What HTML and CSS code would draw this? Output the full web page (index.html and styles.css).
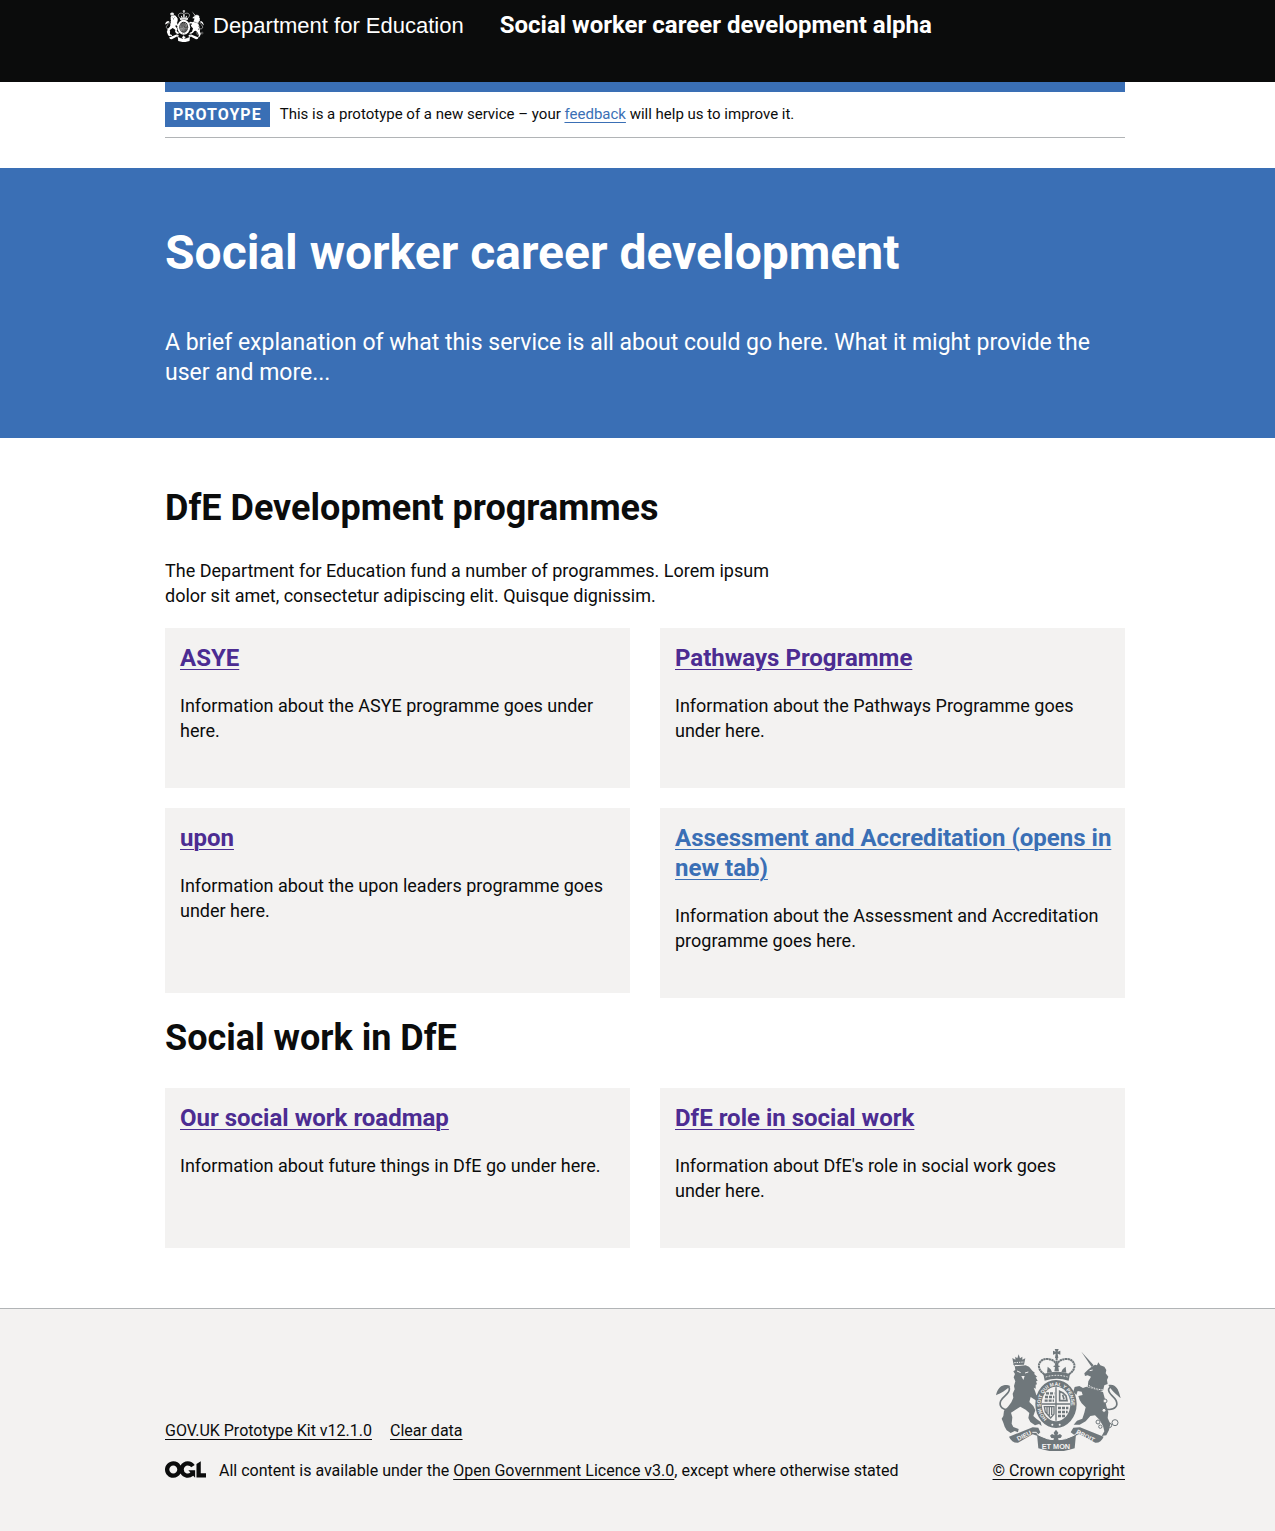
FILE: index.html
```html
<!DOCTYPE html>
<html lang="en">
<head>
<meta charset="utf-8">
<meta name="viewport" content="width=device-width, initial-scale=1">
<title>Social worker career development</title>
<link rel="stylesheet" href="styles.css">
</head>
<body>
<svg class="sprite" aria-hidden="true">
  <defs>
    <symbol id="crest" viewBox="37 25 375 306">
      <g fill="currentColor">
        <!-- lion -->
        <path d="M86 52l9 5 0-9 6 5 4-12 4 12 7-5 0 9 9-4-4 19-31 1z"/>
        <path d="M92 77l34-3 10 4 10 12 8 7-3 2 10 10-5 1 6 11-5 1 3 9-4 1v12l-6-3 4 10 4 12 13 8 6 8-4 9-10-2-8-8-14-9-4 15 12 12 6 13-6 17 9 8 13 10 3 12-8-6-12 4-14-10-6-12 3-15-11-10-16-9-12 8-16 10 4 14-2 19 5 10 16 6-2 10-10-4-12 6-12-8-6-11-4-12-5-12 5-8 2-16 12-12 10-13 6-14-2-12 6-13-2-10 4-14-5-12 4-10-5-8 6-4-2-14-4-5z"/>
        <!-- unicorn -->
        <path d="M293 33l37 41-6 5z"/>
        <path d="M322 80l12-8 6 2 4-9 6 9 12 4 6 10-2 10 8 10-4 10 2 12-10 4-4 16-10 2-36-14 2-16 8-14-10-4-8 2-2-8 10-10z"/>
        <path d="M308 138l50 16 6 22 4 20 6 18-2 18 8 18-4 18-8 16-14 2 8-14-4-16-10-18-14-14-14 2-14 16-18 10-18 0 10-12 16-6 6-18 4-16-12-12-6-10-4-12 13-3-3-10-12-2-4 12-9-10 4-14 14-3 11 6z"/>
      </g>
      <g fill="none" stroke="currentColor" stroke-width="5">
        <path d="M83 206c-26 5-38-9-32-25 7-16 29-22 26-38-3-11-20-8-28 3"/>
        <path d="M370 206c26 3 34-12 27-27-8-15-25-20-22-34 4-10 18-7 25 3"/>
        <g stroke-width="3">
          <circle cx="364" cy="181" r="6" fill="var(--crest-ground)"/>
          <circle cx="361" cy="209" r="6" fill="var(--crest-ground)"/>
          <circle cx="343" cy="244" r="6" fill="var(--crest-ground)"/>
          <circle cx="350" cy="258" r="5" fill="var(--crest-ground)"/>
          <circle cx="377" cy="254" r="7"/>
          <circle cx="394" cy="246" r="9"/>
        </g>
      </g>
      <path fill="currentColor" d="M80 136c-22-9-38 4-43 28 17-8 28-14 43-28zM374 133c22-5 31 12 37 40-14-13-25-20-37-40z"/>
      <g fill="none" stroke="var(--crest-ground)" stroke-width="3">
        <path d="M100 91l11 5M124 97l10-3"/>
        <path d="M92 66l29-2" stroke-dasharray="4 3"/>
        <path d="M309 130l14 9 16 6 19 3" stroke-dasharray="5 3"/>
        <path d="M318 90l9-2"/>
      </g>
      <path fill="var(--crest-ground)" d="M113 106h10l-4 12z"/>
      <!-- crown -->
      <g fill="currentColor">
        <path d="M213 25h12l-3 8 8-3v12l-8-3 2 13h-10l2-13-8 3v-12l8 3z"/>
        <path d="M179 100q40-13 80 0l-4 20q-36-11-72 0z"/>
        <path d="M190 96l2-18 9 8 4 8zM248 96l-2-18-9 8-4 8zM212 92l2-12-6-3 7-3 4-8 4 8 7 3-6 3 2 12z"/>
      </g>
      <g fill="none" stroke="currentColor" stroke-width="6" stroke-dasharray="7 1">
        <path d="M182 101c-26-18-19-45 7-46 20 0 29 10 29 22"/>
        <path d="M256 101c26-18 19-45-7-46-20 0-29 10-29 22"/>
        <path d="M219 52v16"/>
      </g>
      <path fill="none" stroke="var(--crest-ground)" stroke-width="3" stroke-dasharray="5 4" d="M186 109q33-10 66 0"/>
      <!-- garter and shield -->
      <ellipse cx="217" cy="190" rx="62" ry="72" fill="currentColor"/>
      <ellipse cx="217" cy="190" rx="43" ry="52" fill="var(--crest-ground)"/>
      <g fill="var(--crest-ground)"><circle cx="206" cy="252" r="3"/><circle cx="228" cy="252" r="3"/></g>
      <g fill="none" stroke="currentColor" stroke-width="4">
        <path d="M217 140v100M175 190h84"/>
        <path stroke-width="7" stroke-dasharray="9 3" d="M187 158h25M184 169h28M183 180h28M223 202h31M223 214h29M223 226h22"/>
        <path stroke-width="5" d="M228 152v28h22l-3-14-9-9zM237 162l4 14"/>
        <path d="M182 198h29v22l-10 12-16-18zM190 199v20M197 199v26M204 199v24"/>
      </g>
      <!-- ribbon -->
      <g fill="currentColor">
        <path d="M76 288l71-28 17 1 6 14-10 10-13-4-44 25q-19 1-27-18z"/>
        <path d="M360 288l-71-28-20 1-8 14 14 10 13-4 47 25q17 1 25-18z"/>
        <path d="M160 281q58 34 117 0l-4 42q-54 19-109 0z"/>
      </g>
      <path fill="none" stroke="var(--crest-ground)" stroke-width="3" d="M146 275l12 0 6 8q54 30 109 0l8-8 10 0"/>
      <path fill="var(--crest-ground)" d="M193 262q24 7 48 0l2 32q-26 8-52 0z"/>
      <path fill="currentColor" d="M217 267l7 9-3 8 8-4 6 5-4 7-8 1 3 9h-18l3-9-8-1-4-7 6-5 8 4-3-8z"/>
    </symbol>
    <path id="garter-line" d="M190 235A46 55 0 1 1 244 235"/>
  </defs>
</svg>

<header class="header">
  <div class="container header__inner">
    <a class="header__logo" href="#">
      <svg class="header__crest" aria-hidden="true"><use href="#crest"/></svg>
      <span>Department for Education</span>
    </a>
    <a class="header__service" href="#">Social worker career development alpha</a>
  </div>
</header>

<div class="page-row">
  <div class="container phase">
    <strong class="phase__tag">PROTOYPE</strong>
    <span class="phase__text">This is a prototype of a new service – your <a class="link" href="#">feedback</a> will help us to improve it.</span>
  </div>
</div>

<section class="hero">
  <div class="container">
    <h1 class="hero__title">Social worker career development</h1>
    <p class="hero__text">A brief explanation of what this service is all about could go here. What it might provide the user and more...</p>
  </div>
</section>

<main class="page-row main">
  <div class="container">
    <h2 class="heading">DfE Development programmes</h2>
    <p class="intro">The Department for Education fund a number of programmes. Lorem ipsum dolor sit amet, consectetur adipiscing elit. Quisque dignissim.</p>
    <div class="cards">
      <article class="card">
        <h3 class="card__title"><a class="link link--visited" href="#">ASYE</a></h3>
        <p class="card__text">Information about the ASYE programme goes under here.</p>
      </article>
      <article class="card">
        <h3 class="card__title"><a class="link link--visited" href="#">Pathways Programme</a></h3>
        <p class="card__text">Information about the Pathways Programme goes under here.</p>
      </article>
      <article class="card card--tall">
        <h3 class="card__title"><a class="link link--visited" href="#">upon</a></h3>
        <p class="card__text">Information about the upon leaders programme goes under here.</p>
      </article>
      <article class="card card--tall">
        <h3 class="card__title"><a class="link" href="#">Assessment and Accreditation (opens in new tab)</a></h3>
        <p class="card__text">Information about the Assessment and Accreditation programme goes here.</p>
      </article>
    </div>
    <h2 class="heading">Social work in DfE</h2>
    <div class="cards">
      <article class="card">
        <h3 class="card__title"><a class="link link--visited" href="#">Our social work roadmap</a></h3>
        <p class="card__text">Information about future things in DfE go under here.</p>
      </article>
      <article class="card">
        <h3 class="card__title"><a class="link link--visited" href="#">DfE role in social work</a></h3>
        <p class="card__text">Information about DfE's role in social work goes under here.</p>
      </article>
    </div>
  </div>
</main>

<footer class="footer">
  <div class="container footer__inner">
    <div class="footer__meta">
      <ul class="footer__links">
        <li><a class="footer__link" href="#">GOV.UK Prototype Kit v12.1.0</a></li>
        <li><a class="footer__link" href="#">Clear data</a></li>
      </ul>
      <div class="footer__licence">
        <svg class="footer__ogl" viewBox="0 0 483 196" role="img" aria-label="Open Government Licence">
          <path fill="currentColor" d="M421.500 142.800V.1l-50.700 32.300v161.100h112.400v-50.700zm-122.300-9.600A47.120 47.120 0 0 1 221 97.800c0-26 21.100-47.100 47.100-47.100 16.700 0 31.400 8.700 39.700 21.800l42.700-27.200A97.630 97.630 0 0 0 268.100 0c-36.500 0-68.300 20.100-85.100 49.700A98 98 0 0 0 97.800 0C43.900 0 0 43.900 0 97.800s43.900 97.800 97.800 97.800c36.500 0 68.300-20.100 85.100-49.700a97.760 97.760 0 0 0 149.600 25.400l19.400 22.200h3v-87.800h-80l24.300 27.500zM97.800 145c-26 0-47.100-21.100-47.100-47.100s21.100-47.100 47.100-47.100 47.100 21.100 47.100 47.100S123.800 145 97.800 145"/>
        </svg>
        <span>All content is available under the <a class="footer__link" href="#">Open Government Licence v3.0</a>, except where otherwise stated</span>
      </div>
    </div>
    <a class="footer__copyright" href="#">
      <svg class="footer__crest" viewBox="37 25 375 306" aria-hidden="true">
        <use href="#crest" x="37" y="25" width="375" height="306"/>
        <g class="crest-motto">
          <text x="104" y="301" transform="rotate(-27 104 301)">DIEU</text>
          <text x="276" y="278" transform="rotate(27 276 278)">DROIT</text>
          <text class="crest-motto__centre" x="174" y="324">ET MON</text>
          <text class="crest-motto__ring"><textPath href="#garter-line">HONI SOIT QUI MAL Y PENSE</textPath></text>
        </g>
      </svg>
      <span>© Crown copyright</span>
    </a>
  </div>
</footer>
</body>
</html>
```
FILE: styles.css
```css
:root {
  --ink: #0b0c0c;
  --blue: #3a6fb5;
  --purple: #4c2c92;
  --grey: #f3f2f1;
  --rule: #b1b4b6;
}

* { box-sizing: border-box; }

body {
  margin: 0;
  color: var(--ink);
  background: #fff;
  font: 18px/25px Roboto, "Noto Sans", sans-serif;
}

h1, h2, h3, p, ul { margin: 0; padding: 0; }

.sprite { position: absolute; width: 0; height: 0; }

.header, .page-row, .hero, .footer { padding-left: 15px; }

.container { max-width: 960px; margin: 0 auto; }

.link { color: var(--blue); text-underline-offset: 3px; text-decoration-thickness: 1px; }
.link--visited { color: var(--purple); }

.header { background: var(--ink); color: #fff; }
.header__inner {
  display: flex;
  align-items: flex-start;
  gap: 36px;
  min-height: 82px;
  padding-top: 10px;
}
.header__logo {
  display: flex;
  align-items: center;
  gap: 9px;
  color: inherit;
  font: 22px/32px "Liberation Sans", sans-serif;
  text-decoration: none;
}
.header__crest { width: 39px; height: 32px; --crest-ground: #0b0c0c; }
.header__service {
  color: inherit;
  font-size: 24px;
  font-weight: 700;
  line-height: 30px;
  text-decoration: none;
}

.phase {
  display: flex;
  align-items: center;
  gap: 10px;
  padding: 10px 0;
  border-top: 10px solid var(--blue);
  border-bottom: 1px solid var(--rule);
}
.phase__tag {
  padding: 0 8px;
  background: var(--blue);
  color: #fff;
  font-size: 16px;
  letter-spacing: 1px;
}
.phase__text { font-size: 15px; }

.hero { margin-top: 30px; padding-top: 60px; padding-bottom: 50px; background: var(--blue); color: #fff; }
.hero__title { margin-bottom: 50px; font-size: 48px; line-height: 50px; }
.hero__text { font-size: 23px; line-height: 30px; }

.main { padding-top: 50px; padding-bottom: 60px; }
.heading { margin-bottom: 30px; font-size: 36px; line-height: 40px; }
.intro { max-width: 640px; margin-bottom: 20px; }

.cards { display: grid; grid-template-columns: 1fr 1fr; align-items: start; gap: 20px 30px; }
.cards + .heading { margin-top: 20px; }
.card { min-height: 160px; padding: 15px 10px 45px 15px; background: var(--grey); }
.card--tall { min-height: 185px; }
.card__title { margin-bottom: 20px; font-size: 24px; line-height: 30px; }
.card__text { padding-right: 15px; }

.footer {
  padding-top: 40px;
  padding-bottom: 50px;
  border-top: 1px solid var(--rule);
  background: var(--grey);
  font-size: 16px;
  line-height: 20px;
}
.footer__inner { display: flex; align-items: flex-end; justify-content: space-between; }
.footer__links { display: flex; gap: 18px; margin-bottom: 20px; list-style: none; }
.footer__link, .footer__copyright { color: inherit; text-underline-offset: 3px; text-decoration-thickness: 1px; }
.footer__licence { display: flex; align-items: flex-start; gap: 13px; }
.footer__ogl { width: 41px; height: 17px; }
.footer__copyright { display: flex; flex-direction: column; align-items: center; gap: 10px; }
.footer__crest { width: 125px; height: 102px; color: #6f777b; --crest-ground: #f3f2f1; }
.crest-motto { fill: var(--grey); font: 700 19px "Liberation Sans", sans-serif; }
.crest-motto__centre { font-size: 22px; }
.crest-motto__ring { font-size: 15px; }
```
